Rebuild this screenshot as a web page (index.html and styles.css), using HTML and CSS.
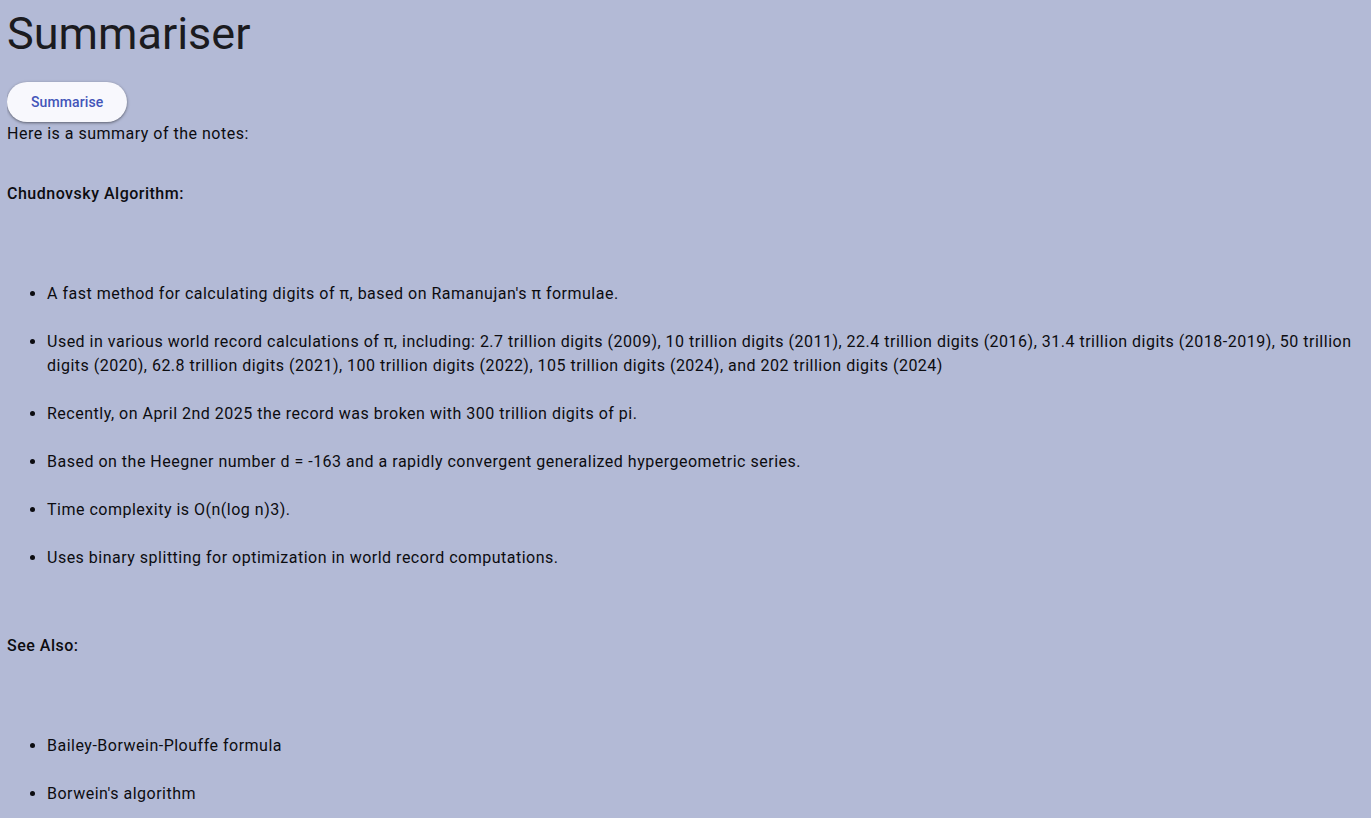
FILE: index.html
```html
<!DOCTYPE html>
<html>
<head>
<meta charset="utf-8">
<title>Summariser</title>
<link rel="stylesheet" href="styles.css">
</head>
<body>
<h1 class="title">Summariser</h1>
<button class="btn">Summarise</button>
<div class="summary">
  <p class="line">Here is a summary of the notes:</p>
  <p class="heading">Chudnovsky Algorithm:</p>
  <ul class="list">
    <li>A fast method for calculating digits of π, based on Ramanujan's π formulae.</li>
    <li>Used in various world record calculations of π, including: 2.7 trillion digits (2009), 10 trillion digits (2011), 22.4 trillion digits (2016), 31.4 trillion digits (2018-2019), 50 trillion digits (2020), 62.8 trillion digits (2021), 100 trillion digits (2022), 105 trillion digits (2024), and 202 trillion digits (2024)</li>
    <li>Recently, on April 2nd 2025 the record was broken with 300 trillion digits of pi.</li>
    <li>Based on the Heegner number d = -163 and a rapidly convergent generalized hypergeometric series.</li>
    <li>Time complexity is O(n(log n)3).</li>
    <li>Uses binary splitting for optimization in world record computations.</li>
  </ul>
  <p class="heading see">See Also:</p>
  <ul class="list">
    <li>Bailey-Borwein-Plouffe formula</li>
    <li>Borwein's algorithm</li>
  </ul>
</div>
</body>
</html>
```
FILE: styles.css
```css
html, body {
  background: #b3bad6;
}
body {
  margin: 8px 7px;
  font-family: Roboto, "Liberation Sans", sans-serif;
  color: #0c0c10;
}
.title {
  margin: 0;
  font-size: 45px;
  line-height: 52px;
  font-weight: 400;
  color: #1b1b1f;
}
.btn {
  margin-top: 22px;
  height: 40px;
  width: 120px;
  border: none;
  border-radius: 20px;
  background: #f8f8fd;
  color: #4355b9;
  font-family: Roboto, "Liberation Sans", sans-serif;
  font-size: 14px;
  font-weight: 500;
  letter-spacing: 0.1px;
  box-shadow: 0 1px 2px rgba(0,0,0,0.3), 0 1px 3px 1px rgba(0,0,0,0.15);
  display: block;
  padding: 0 24px;
}
.summary {
  font-size: 16px;
  line-height: 24px;
  letter-spacing: 0.5px;
}
.line {
  margin: 0;
}
.heading {
  margin: 36px 0 0;
  font-weight: 500;
}
.heading.see {
  margin-top: 64px;
}
.list {
  margin: 76px 0 0;
  padding-left: 40px;
}
.list li {
  margin-bottom: 24px;
}
```
